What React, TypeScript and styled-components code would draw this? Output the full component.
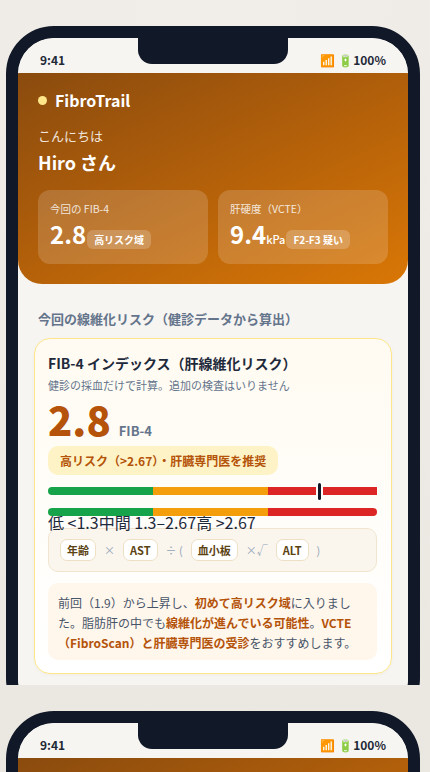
import React from "react";
import styled, { createGlobalStyle } from "styled-components";

const GlobalStyle = createGlobalStyle`
  body {
    margin: 0;
    background: radial-gradient(circle at 50% 0%, #f1eee9 0%, #e9e5df 70%);
    font-family: "Noto Sans CJK JP", "Noto Sans", sans-serif;
  }
`;

const FrameSlot = styled.div`
  height: 685px;
  box-sizing: border-box;
  padding: 26px 0 0 6px;
  overflow: hidden;
`;

const Phone = styled.div`
  width: 414px;
  box-sizing: border-box;
  border: 12px solid #111827;
  border-radius: 48px;
  background: #f6f5f2;
  overflow: hidden;
`;

const Screen = styled.div`
  position: relative;
  border-radius: 36px 36px 0 0;
  overflow: hidden;
  background: #f6f5f2;
  padding-bottom: 40px;
`;

const Notch = styled.div`
  position: absolute;
  top: 0;
  left: 50%;
  transform: translateX(-50%);
  width: 150px;
  height: 26px;
  background: #111827;
  border-radius: 0 0 14px 14px;
  z-index: 2;
`;

const StatusBar = styled.div`
  height: 35px;
  box-sizing: border-box;
  padding: 13px 22px 0;
  display: flex;
  justify-content: space-between;
  font-size: 12px;
  font-weight: 700;
  color: #1f2937;
`;

const Header = styled.header`
  padding: 15px 20px 20px;
  border-radius: 0 0 24px 24px;
  background: linear-gradient(155deg, #8a4b0e 0%, #b3600a 50%, #d97706 100%);
  color: #fff;
`;

const Brand = styled.div`
  display: flex;
  align-items: center;
  gap: 8px;
  font-size: 16px;
  font-weight: 700;
`;

const Dot = styled.span`
  width: 9px;
  height: 9px;
  border-radius: 50%;
  background: #fde68a;
`;

const Greeting = styled.div`
  margin-top: 14px;
  font-size: 13px;
  opacity: 0.85;
`;

const Name = styled.div`
  margin-top: 4px;
  font-size: 18px;
  font-weight: 700;
`;

const StatGrid = styled.div`
  margin-top: 15px;
  display: grid;
  grid-template-columns: 1fr 1fr;
  gap: 10px;
`;

const StatCard = styled.div`
  height: 74px;
  box-sizing: border-box;
  padding: 11px 12px;
  border-radius: 12px;
  background: rgba(255, 255, 255, 0.16);
`;

const StatLabel = styled.div`
  font-size: 10.5px;
  opacity: 0.82;
`;

const StatValue = styled.div`
  display: flex;
  align-items: baseline;
  margin-top: 2px;
  font-size: 24px;
  font-weight: 700;
  line-height: 32px;
`;

const Unit = styled.span`
  font-size: 11px;
  font-weight: 500;
`;

const StatBadge = styled.span`
  margin-left: 1px;
  padding: 2px 7px;
  border-radius: 6px;
  background: rgba(255, 255, 255, 0.2);
  font-size: 10px;
  font-weight: 700;
  line-height: 15px;
`;

const Section = styled.section`
  padding: 25px 16px 0;
`;

const SectionTitle = styled.h3`
  margin: 0 0 10px;
  padding-left: 4px;
  font-size: 13px;
  font-weight: 700;
  color: #64748b;
`;

const RiskCard = styled.div`
  padding: 14px 14px 13px 13px;
  border: 1px solid #fde68a;
  border-radius: 16px;
  background: linear-gradient(180deg, #fffbf2 0%, #ffffff 100%);
  box-shadow: 0 1px 3px rgba(180, 120, 20, 0.06);
`;

const CardTitle = styled.div`
  font-size: 14px;
  font-weight: 700;
  color: #1e293b;
`;

const CardSub = styled.div`
  margin-top: 4px;
  font-size: 11px;
  color: #64748b;
`;

const ScoreRow = styled.div`
  margin-top: 4px;
  display: flex;
  align-items: baseline;
  gap: 8px;
`;

const Score = styled.span`
  font-size: 40px;
  font-weight: 800;
  line-height: 44px;
  color: #b45309;
`;

const ScoreUnit = styled.span`
  font-size: 13px;
  font-weight: 700;
  color: #64748b;
`;

const RiskBadge = styled.div`
  display: inline-block;
  margin-top: 5px;
  padding: 6px 12px;
  border-radius: 10px;
  background: #fef3c7;
  font-size: 12px;
  font-weight: 700;
  line-height: 17px;
  color: #b45309;
`;

const Bar = styled.div<{ $top: number }>`
  position: relative;
  margin-top: ${(p) => p.$top}px;
  height: 8px;
  display: flex;
`;

const Segment = styled.div<{ $color: string; $w: number }>`
  width: ${(p) => p.$w}%;
  background: ${(p) => p.$color};
  &:first-child {
    border-radius: 4px 0 0 4px;
  }
  &:last-child {
    border-radius: 0 4px 4px 0;
  }
`;

const Marker = styled.div`
  position: absolute;
  top: -4px;
  width: 3px;
  height: 17px;
  border-radius: 2px;
  background: #111827;
  box-shadow: 0 0 0 2px #fffefb;
`;

const ScaleLabels = styled.div`
  font-size: 16px;
  line-height: 12px;
  height: 12px;
  color: #1e293b;
  white-space: nowrap;
`;

const Formula = styled.div`
  padding: 10px 11px;
  display: flex;
  align-items: center;
  gap: 8px;
  border: 1px solid #f1e5cf;
  border-radius: 10px;
  background: #faf6ee;
`;

const Chip = styled.span`
  height: 22px;
  box-sizing: border-box;
  padding: 0 6px;
  display: inline-flex;
  align-items: center;
  border: 1px solid #eee0c4;
  border-radius: 7px;
  background: #fff;
  font-size: 11px;
  font-weight: 700;
  color: #5c4313;
`;

const Op = styled.span`
  font-size: 11px;
  color: #94a3b8;
`;

const Note = styled.p`
  margin: 11px 0 0;
  padding: 10px 10px 7px;
  border-radius: 10px;
  background: #fff6ec;
  font-size: 12px;
  line-height: 20px;
  color: #475569;
`;

const Em = styled.b`
  font-weight: 700;
  color: #b45309;
`;

const segments = [
  { color: "#16a34a", w: 32 },
  { color: "#f59e0b", w: 35 },
  { color: "#dc2626", w: 33 },
];

function RiskBar({ top, marker }: { top: number; marker?: number }) {
  return (
    <Bar $top={top}>
      {segments.map((s) => (
        <Segment key={s.color} $color={s.color} $w={s.w} />
      ))}
      {marker !== undefined && <Marker style={{ left: `${marker}%` }} />}
    </Bar>
  );
}

function PhoneScreen() {
  return (
    <Phone>
      <Screen>
        <Notch />
        <StatusBar>
          <span>9:41</span>
          <span>📶 🔋100%</span>
        </StatusBar>
        <Header>
          <Brand>
            <Dot />
            FibroTrail
          </Brand>
          <Greeting>こんにちは</Greeting>
          <Name>Hiro さん</Name>
          <StatGrid>
            <StatCard>
              <StatLabel>今回の FIB-4</StatLabel>
              <StatValue>
                2.8<StatBadge>高リスク域</StatBadge>
              </StatValue>
            </StatCard>
            <StatCard>
              <StatLabel>肝硬度（VCTE）</StatLabel>
              <StatValue>
                9.4<Unit>kPa</Unit>
                <StatBadge>F2-F3 疑い</StatBadge>
              </StatValue>
            </StatCard>
          </StatGrid>
        </Header>

        <Section>
          <SectionTitle>今回の線維化リスク（健診データから算出）</SectionTitle>
          <RiskCard>
            <CardTitle>FIB-4 インデックス（肝線維化リスク）</CardTitle>
            <CardSub>健診の採血だけで計算。追加の検査はいりません</CardSub>
            <ScoreRow>
              <Score>2.8</Score>
              <ScoreUnit>FIB-4</ScoreUnit>
            </ScoreRow>
            <RiskBadge>高リスク（&gt;2.67）・肝臓専門医を推奨</RiskBadge>
            <RiskBar top={12} marker={82} />
            <RiskBar top={13} />
            <ScaleLabels>低 &lt;1.3中間 1.3–2.67高 &gt;2.67</ScaleLabels>
            <Formula>
              <Chip>年齢</Chip>
              <Op>×</Op>
              <Chip>AST</Chip>
              <Op>÷ (</Op>
              <Chip>血小板</Chip>
              <Op>×√</Op>
              <Chip>ALT</Chip>
              <Op>)</Op>
            </Formula>
            <Note>
              前回（1.9）から上昇し、<Em>初めて高リスク域</Em>に入りました。脂肪肝の中でも
              <Em>線維化が進んでいる可能性</Em>。
              <Em>VCTE（FibroScan）と肝臓専門医の受診</Em>をおすすめします。
            </Note>
          </RiskCard>
        </Section>
      </Screen>
    </Phone>
  );
}

export default function App() {
  return (
    <>
      <GlobalStyle />
      <FrameSlot>
        <PhoneScreen />
      </FrameSlot>
      <FrameSlot>
        <PhoneScreen />
      </FrameSlot>
    </>
  );
}
